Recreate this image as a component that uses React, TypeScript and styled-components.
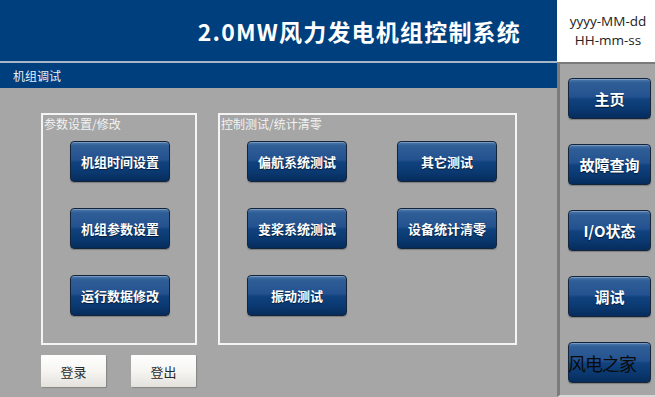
import React from "react";
import styled, { createGlobalStyle } from "styled-components";

const Global = createGlobalStyle`
  html, body { margin: 0; padding: 0; background: #a6a6a6; }
  body { font-family: "Noto Sans CJK SC", "Noto Sans", sans-serif; }
`;

const Page = styled.div`
  width: 655px;
  height: 397px;
  display: flex;
  overflow: hidden;
  background: #a6a6a6;
`;

const Main = styled.div`
  width: 557px;
  display: flex;
  flex-direction: column;
`;

const Header = styled.div`
  height: 61px;
  background: #003f7e;
  display: flex;
  align-items: center;
  justify-content: flex-end;
  padding-right: 36px;
  box-sizing: border-box;
`;

const Title = styled.h1`
  margin: 0;
  color: #ffffff;
  font-family: "Noto Sans CJK SC", "Noto Sans", sans-serif;
  font-weight: 700;
  font-size: 23px;
  letter-spacing: 1.2px;
  line-height: 1;
  padding-top: 2px;
`;

const Divider = styled.div`
  height: 2px;
  background: #a9b6c8;
`;

const SubBar = styled.div`
  height: 25px;
  background: #003f7e;
  color: #e8eef6;
  font-size: 12px;
  display: flex;
  align-items: center;
  padding-left: 13px;
`;

const Content = styled.div`
  flex: 1;
  padding: 25px 0 0 41px;
  display: flex;
  flex-direction: column;
  gap: 10px;
`;

const Groups = styled.div`
  display: flex;
  gap: 21px;
`;

const Group = styled.div<{ $w: number }>`
  width: ${(p) => p.$w}px;
  height: 232px;
  box-sizing: border-box;
  border: 2px solid #f4f4f4;
  display: flex;
  flex-direction: column;
`;

const GroupLabel = styled.div`
  color: #f2f2f2;
  font-size: 12px;
  line-height: 14px;
  padding: 2px 0 0 1px;
  height: 14px;
`;

const ButtonGrid = styled.div<{ $cols: number }>`
  display: grid;
  grid-template-columns: repeat(${(p) => p.$cols}, 100px);
  column-gap: 50px;
  row-gap: 26px;
  padding: 10px 0 0 27px;
`;

const BlueButton = styled.button<{ $w?: number }>`
  position: relative;
  width: ${(p) => p.$w ?? 100}px;
  height: 41px;
  border: 1px solid #14253b;
  border-radius: 4px;
  padding: 0;
  background: linear-gradient(
    to bottom,
    #4d79ac 0%,
    #2f5e96 10%,
    #245290 45%,
    #10427e 52%,
    #0b3a72 75%,
    #062c5c 100%
  );
  box-shadow: inset 0 1px 0 rgba(255, 255, 255, 0.25), 0 1px 1px rgba(0, 0, 0, 0.25);
  color: #ffffff;
  font-family: "Noto Sans CJK SC", "Noto Sans", sans-serif;
  font-weight: 700;
  font-size: 13px;
  text-shadow: 0 1px 1px #001a36;
  cursor: pointer;
`;

const SideText = styled.span`
  font-size: 15px;
`;

const LoginRow = styled.div`
  display: flex;
  gap: 25px;
`;

const LightButton = styled.button`
  width: 65px;
  height: 32px;
  border: none;
  border-radius: 1px;
  padding: 0;
  background: linear-gradient(to bottom, #ffffff 0%, #f6f5f2 50%, #e3e1dc 100%);
  box-shadow: 1px 1px 1px rgba(0, 0, 0, 0.2);
  color: #2a2a2a;
  font-family: "Noto Sans CJK SC", "Noto Sans", sans-serif;
  font-size: 13px;
  cursor: pointer;
`;

const Side = styled.div`
  width: 98px;
  display: flex;
  flex-direction: column;
`;

const DateBox = styled.div`
  height: 62px;
  background: #ffffff;
  color: #222222;
  font-family: "Open Sans", "Noto Sans", sans-serif;
  font-size: 13.5px;
  display: flex;
  flex-direction: column;
  align-items: center;
  justify-content: center;
  gap: 6px;
  padding-left: 4px;
  line-height: 1;
`;

const SideNav = styled.div`
  flex: 1;
  border-left: 3px solid #7b7b7b;
  border-top: 2px solid #7b7b7b;
  border-bottom: 2px solid #d8d8d8;
  padding: 14px 0 0 8px;
  display: flex;
  flex-direction: column;
  gap: 25px;
`;

const Watermark = styled.span`
  position: absolute;
  left: -1px;
  top: 7px;
  color: #0a0a0a;
  font-size: 18px;
  font-weight: 400;
  text-shadow: none;
  white-space: nowrap;
  letter-spacing: -1px;
`;

const paramButtons = ["机组时间设置", "机组参数设置", "运行数据修改"];
const testButtons = ["偏航系统测试", "其它测试", "变桨系统测试", "设备统计清零", "振动测试"];
const navButtons = ["主页", "故障查询", "I/O状态", "调试"];

export default function App() {
  return (
    <Page>
      <Global />
      <Main>
        <Header>
          <Title>2.0MW风力发电机组控制系统</Title>
        </Header>
        <Divider />
        <SubBar>机组调试</SubBar>
        <Content>
          <Groups>
            <Group $w={156}>
              <GroupLabel>参数设置/修改</GroupLabel>
              <ButtonGrid $cols={1}>
                {paramButtons.map((t) => (
                  <BlueButton key={t}>{t}</BlueButton>
                ))}
              </ButtonGrid>
            </Group>
            <Group $w={299}>
              <GroupLabel>控制测试/统计清零</GroupLabel>
              <ButtonGrid $cols={2}>
                {testButtons.map((t) => (
                  <BlueButton key={t}>{t}</BlueButton>
                ))}
              </ButtonGrid>
            </Group>
          </Groups>
          <LoginRow>
            <LightButton>登录</LightButton>
            <LightButton>登出</LightButton>
          </LoginRow>
        </Content>
      </Main>
      <Side>
        <DateBox>
          <span>yyyy-MM-dd</span>
          <span>HH-mm-ss</span>
        </DateBox>
        <SideNav>
          {navButtons.map((t) => (
            <BlueButton key={t} $w={83}>
              <SideText>{t}</SideText>
            </BlueButton>
          ))}
          <BlueButton $w={83}>
            <Watermark>风电之家</Watermark>
          </BlueButton>
        </SideNav>
      </Side>
    </Page>
  );
}
